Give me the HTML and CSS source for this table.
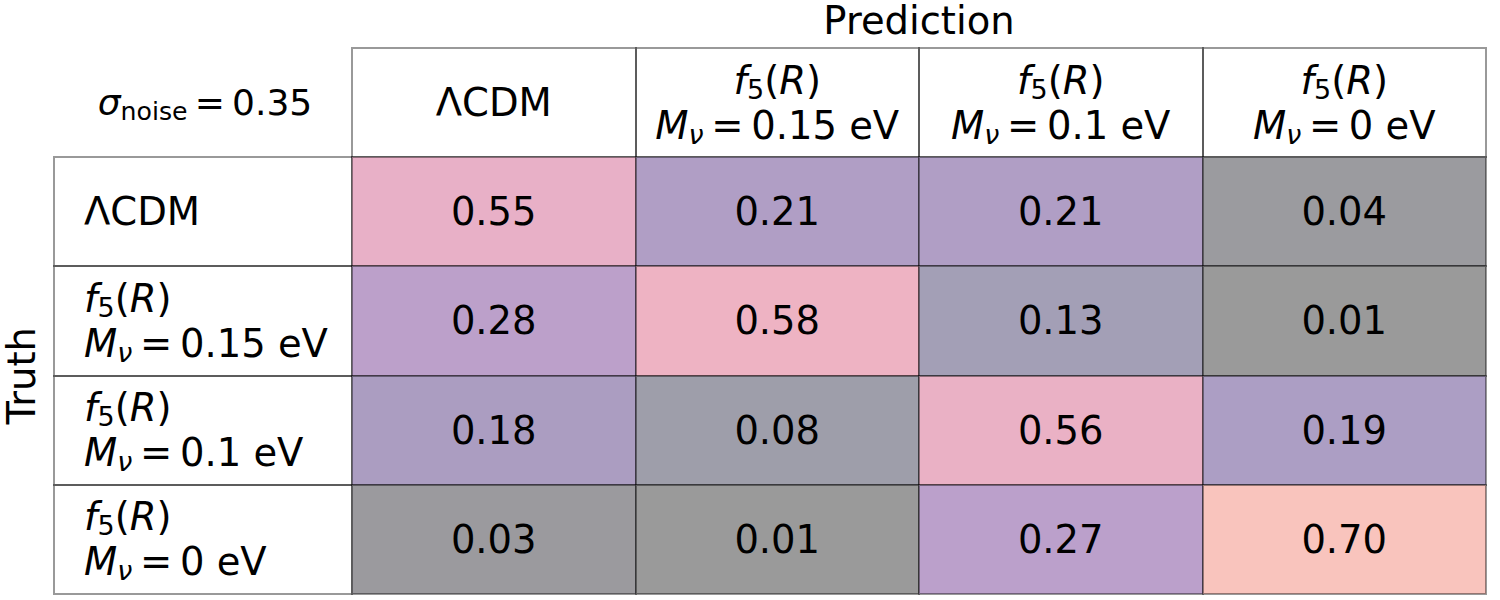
FILE: index.html
```html
<!DOCTYPE html>
<html>
<head>
<meta charset="utf-8">
<link rel="stylesheet" href="styles.css">
</head>
<body>
<div class="figure">
  <div class="axis-top">Prediction</div>
  <div class="axis-left"><span class="axis-left-text">Truth</span></div>

  <div class="table">
    <div class="corner"><span class="line"><i class="sym">σ</i><sub>noise</sub><span class="eq">=</span>0.35</span></div>
    <div class="cell head"><span class="line">ΛCDM</span></div>
    <div class="cell head"><span class="line"><i>f</i><sub>5</sub>(<i>R</i>)</span><span class="line"><i>M</i><sub><i>ν</i></sub><span class="eq">=</span>0.15 eV</span></div>
    <div class="cell head"><span class="line"><i>f</i><sub>5</sub>(<i>R</i>)</span><span class="line"><i>M</i><sub><i>ν</i></sub><span class="eq">=</span>0.1 eV</span></div>
    <div class="cell head"><span class="line"><i>f</i><sub>5</sub>(<i>R</i>)</span><span class="line"><i>M</i><sub><i>ν</i></sub><span class="eq">=</span>0 eV</span></div>

    <div class="cell label"><span class="line">ΛCDM</span></div>
    <div class="cell val c-055">0.55</div>
    <div class="cell val c-021a">0.21</div>
    <div class="cell val c-021b">0.21</div>
    <div class="cell val c-004">0.04</div>

    <div class="cell label"><span class="line"><i>f</i><sub>5</sub>(<i>R</i>)</span><span class="line"><i>M</i><sub><i>ν</i></sub><span class="eq">=</span>0.15 eV</span></div>
    <div class="cell val c-028">0.28</div>
    <div class="cell val c-058">0.58</div>
    <div class="cell val c-013">0.13</div>
    <div class="cell val c-001">0.01</div>

    <div class="cell label"><span class="line"><i>f</i><sub>5</sub>(<i>R</i>)</span><span class="line"><i>M</i><sub><i>ν</i></sub><span class="eq">=</span>0.1 eV</span></div>
    <div class="cell val c-018">0.18</div>
    <div class="cell val c-008">0.08</div>
    <div class="cell val c-056">0.56</div>
    <div class="cell val c-019">0.19</div>

    <div class="cell label"><span class="line"><i>f</i><sub>5</sub>(<i>R</i>)</span><span class="line"><i>M</i><sub><i>ν</i></sub><span class="eq">=</span>0 eV</span></div>
    <div class="cell val c-003">0.03</div>
    <div class="cell val c-001b">0.01</div>
    <div class="cell val c-027">0.27</div>
    <div class="cell val c-070">0.70</div>
  </div>
</div>
</body>
</html>
```

FILE: styles.css
```css
html, body {
  margin: 0;
  padding: 0;
  background: #ffffff;
}

body {
  width: 1500px;
  height: 600px;
  overflow: hidden;
  font-family: "DejaVu Sans", "Liberation Sans", sans-serif;
  font-size: 38.5px;
  color: #000000;
}

.figure {
  display: grid;
  grid-template-columns: 54px auto;
  grid-template-rows: 48px auto;
}

.axis-top {
  grid-column: 2;
  grid-row: 1;
  padding-left: 298px;
  width: 1134px;
  text-align: center;
  line-height: 42px;
}

.axis-left {
  grid-column: 1;
  grid-row: 2;
  padding-top: 109px;
  display: flex;
  align-items: center;
  justify-content: flex-start;
}

.axis-left-text {
  writing-mode: vertical-rl;
  transform: rotate(180deg);
  line-height: 45px;
  margin-left: -1px;
}

.table {
  grid-column: 2;
  grid-row: 2;
  display: grid;
  grid-template-columns: 298px repeat(4, 283.5px);
  grid-template-rows: 109px repeat(4, 109.25px);
}

.corner {
  display: flex;
  align-items: center;
  justify-content: center;
  white-space: nowrap;
  line-height: 45px;
  font-size: 36px;
  padding-left: 4px;
}

.cell {
  outline: 2px solid rgba(0, 0, 0, 0.4);
  outline-offset: -1px;
  display: flex;
  flex-direction: column;
  justify-content: center;
  white-space: nowrap;
  line-height: 45px;
}

.head {
  align-items: center;
  text-align: center;
}

.label {
  align-items: flex-start;
  padding-left: 30px;
}

.val {
  align-items: center;
}

.line {
  display: block;
}

i {
  font-style: italic;
}

sub {
  font-size: 0.7em;
  vertical-align: -0.18em;
  line-height: 0;
}

.eq {
  margin: 0 0.2em;
}

.c-055 { background: #e8b0c7; }
.c-021a { background: #b09ec5; }
.c-021b { background: #b09ec5; }
.c-004 { background: #9b9b9f; }
.c-028 { background: #bca0ca; }
.c-058 { background: #eeb3c3; }
.c-013 { background: #a39fb6; }
.c-001 { background: #9a9a9a; }
.c-018 { background: #ab9dc1; }
.c-008 { background: #9e9eaa; }
.c-056 { background: #eab1c5; }
.c-019 { background: #ac9ec4; }
.c-003 { background: #9b9a9e; }
.c-001b { background: #9a9a9a; }
.c-027 { background: #bba0cb; }
.c-070 { background: #f9c4bd; }
```
